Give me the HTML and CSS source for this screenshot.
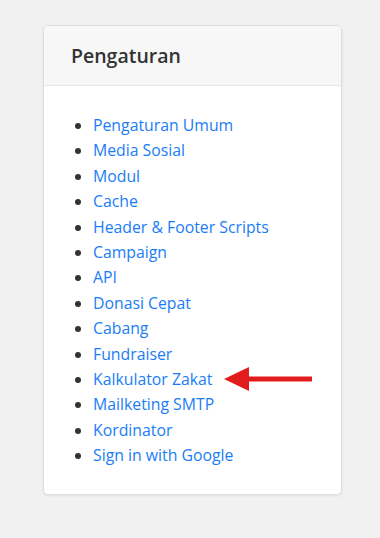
FILE: index.html
```html
<!DOCTYPE html>
<html lang="id">

<head>
    <meta charset="UTF-8">
    <title>Pengaturan</title>
    <link rel="stylesheet" href="styles.css">
</head>

<body>
    <div class="card">
        <div class="card-header">Pengaturan</div>
        <div class="card-body">
            <ul class="menu">
                <li><a href="#">Pengaturan Umum</a></li>
                <li><a href="#">Media Sosial</a></li>
                <li><a href="#">Modul</a></li>
                <li><a href="#">Cache</a></li>
                <li><a href="#">Header &amp; Footer Scripts</a></li>
                <li><a href="#">Campaign</a></li>
                <li><a href="#">API</a></li>
                <li><a href="#">Donasi Cepat</a></li>
                <li><a href="#">Cabang</a></li>
                <li><a href="#">Fundraiser</a></li>
                <li class="marked">
                    <a href="#">Kalkulator Zakat</a>
                    <svg class="arrow" width="90" height="26" viewBox="0 0 90 26">
                        <polygon points="0,12 25,0 25,24" fill="#e21c1c" />
                        <rect x="24" y="9.5" width="64" height="5" fill="#e21c1c" />
                    </svg>
                </li>
                <li><a href="#">Mailketing SMTP</a></li>
                <li><a href="#">Kordinator</a></li>
                <li><a href="#">Sign in with Google</a></li>
            </ul>
        </div>
    </div>
</body>

</html>
```

FILE: styles.css
```css
body {
    margin: 0;
    padding: 25px 38px 44px 43px;
    background: #f1f1f1;
    font-family: "Open Sans", sans-serif;
}

.card {
    background: #ffffff;
    border: 1px solid #dedede;
    border-radius: 5px;
    box-shadow: 0 1px 3px rgba(0, 0, 0, 0.08);
    overflow: hidden;
}

.card-header {
    background: #f7f7f7;
    border-bottom: 1px solid #e6e6e6;
    height: 59px;
    line-height: 59px;
    padding: 0 27px;
    font-size: 19.5px;
    font-weight: 600;
    color: #333333;
}

.card-body {
    padding: 27px 28px 25px 28px;
}

.menu {
    margin: 0;
    padding-left: 21px;
    color: #333333;
}

.menu li {
    font-size: 15.8px;
    line-height: 25.4px;
}

.menu a {
    color: #1a7df6;
    text-decoration: none;
}

.marked {
    position: relative;
}

.arrow {
    position: absolute;
    left: 131px;
    top: 0;
}
```
